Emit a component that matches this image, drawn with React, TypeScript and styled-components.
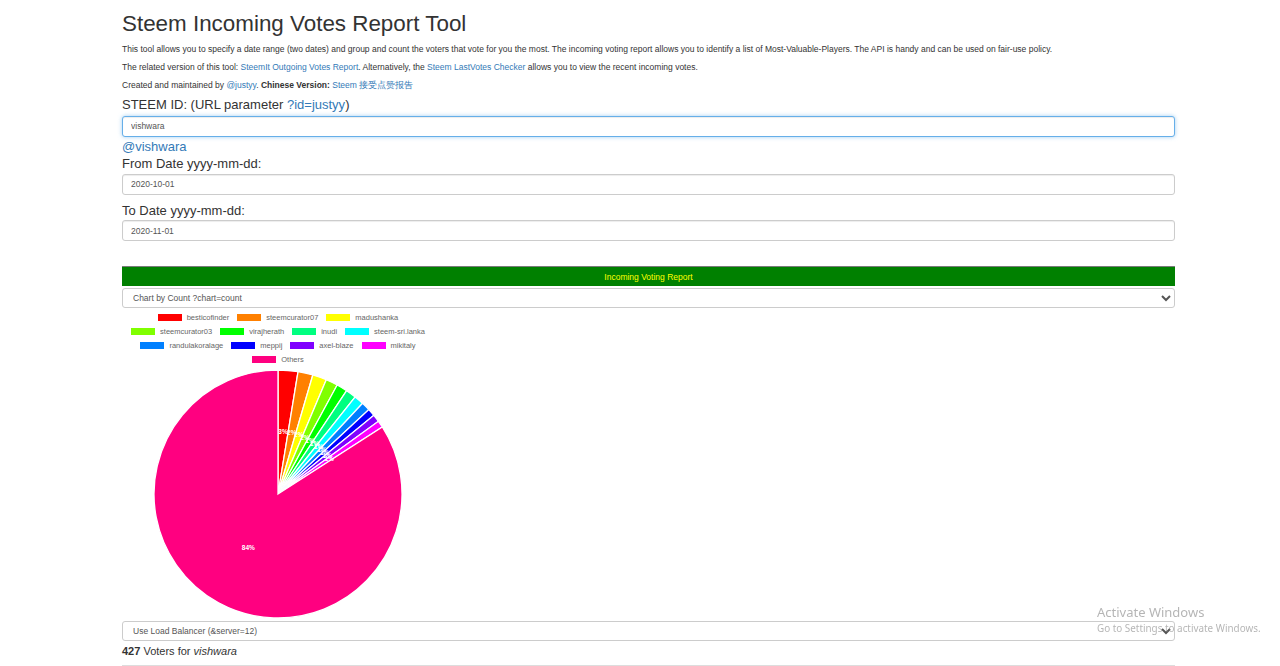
import React from "react";
import styled, {createGlobalStyle} from "styled-components";

type Slice = { name: string; color: string; deg: number }

const slices: Slice[] = [
    {name: "besticofinder", color: "#ff0000", deg: 9.3},
    {name: "steemcurator07", color: "#ff8000", deg: 7.0},
    {name: "madushanka", color: "#ffff00", deg: 6.6},
    {name: "steemcurator03", color: "#80ff00", deg: 5.6},
    {name: "virajherath", color: "#00ff00", deg: 5.1},
    {name: "inudi", color: "#00ff80", deg: 4.9},
    {name: "steem-sri.lanka", color: "#00ffff", deg: 4.5},
    {name: "randulakoralage", color: "#0080ff", deg: 4.1},
    {name: "meppij", color: "#0000ff", deg: 3.5},
    {name: "axel-blaze", color: "#8000ff", deg: 3.5},
    {name: "mikitaly", color: "#ff00ff", deg: 3.2},
    {name: "Others", color: "#ff0080", deg: 302.7},
]

const legendRows = [[0, 1, 2], [3, 4, 5, 6], [7, 8, 9, 10], [11]]

const GlobalStyle = createGlobalStyle`
  body {
    margin: 0;
    background: #fff;
    color: #333;
    font-family: "Liberation Sans", Arial, sans-serif;
  }
`

const Pie: React.FC = () => {
    const cx = 125, cy = 125, r = 124
    const pt = (a: number, rad: number) => {
        const t = a * Math.PI / 180
        return [cx + rad * Math.sin(t), cy - rad * Math.cos(t)]
    }
    let start = 0
    const parts = slices.map(s => {
        const a0 = start, a1 = start + s.deg
        start = a1
        const [x0, y0] = pt(a0, r)
        const [x1, y1] = pt(a1, r)
        const [lx, ly] = pt((a0 + a1) / 2, r / 2)
        return {
            ...s,
            d: `M ${cx} ${cy} L ${x0} ${y0} A ${r} ${r} 0 ${s.deg > 180 ? 1 : 0} 1 ${x1} ${y1} Z`,
            lx, ly,
            label: Math.round(s.deg / 3.6) + "%",
        }
    })
    return (
        <PieSvg width={250} height={250} viewBox="0 0 250 250">
            {parts.map(p => <path key={p.name} d={p.d} fill={p.color} stroke="#fff" strokeWidth={1.3}/>)}
            {parts.map(p => (
                <text key={p.name + "l"} x={p.lx} y={p.ly} fill="#fff" fontSize="6.5" fontWeight="bold"
                      textAnchor="middle" dominantBaseline="middle"
                      fontFamily="Liberation Sans, Arial, sans-serif">{p.label}</text>
            ))}
        </PieSvg>
    )
}

export default function App() {
    return (
        <>
            <GlobalStyle/>
            <Page>
                <Title>Steem Incoming Votes Report Tool</Title>
                <Text>This tool allows you to specify a date range (two dates) and group and count the voters that vote
                    for you the most. The incoming voting report allows you to identify a list of
                    Most-Valuable-Players. The API is handy and can be used on fair-use policy.</Text>
                <Text>The related version of this tool: <Link href="#">SteemIt Outgoing Votes Report</Link>.
                    Alternatively, the <Link href="#">Steem LastVotes Checker</Link> allows you to view the recent
                    incoming votes.</Text>
                <Text>Created and maintained by <Link href="#">@justyy</Link>. <b>Chinese Version:</b> <Link
                    href="#">Steem 接受点赞报告</Link></Text>

                <Label $top={2} $bottom={4}>STEEM ID: (URL parameter <Link href="#">?id=justyy</Link>)</Label>
                <Field $focused defaultValue="vishwara"/>
                <Profile href="#">@vishwara</Profile>

                <Label $top={1}>From Date yyyy-mm-dd:</Label>
                <Field defaultValue="2020-10-01"/>
                <Label $top={9}>To Date yyyy-mm-dd:</Label>
                <Field defaultValue="2020-11-01"/>

                <ReportBar>Incoming Voting Report</ReportBar>
                <Select defaultValue="count">
                    <option value="count">Chart by Count ?chart=count</option>
                </Select>

                <ChartBox>
                    {legendRows.map((row, i) => (
                        <LegendRow key={i}>
                            {row.map(idx => (
                                <LegendItem key={idx}>
                                    <Swatch $color={slices[idx].color}/>
                                    {slices[idx].name}
                                </LegendItem>
                            ))}
                        </LegendRow>
                    ))}
                    <Pie/>
                </ChartBox>

                <Select defaultValue="12">
                    <option value="12">Use Load Balancer (&amp;server=12)</option>
                </Select>
                <Summary><b>427</b> Voters for <i>vishwara</i></Summary>
                <Divider/>
            </Page>
            <Watermark>
                <WatermarkTitle>Activate Windows</WatermarkTitle>
                <WatermarkText>Go to Settings to activate Windows.</WatermarkText>
            </Watermark>
        </>
    )
}

const Page = styled.div`
  margin-left: 122px;
  width: 1053px;
  padding-top: 12px;
`
const Title = styled.h1`
  margin: 0 0 6px;
  font-size: 22.4px;
  font-weight: 500;
  line-height: 1.1;
  color: #333;
`
const Text = styled.p`
  margin: 0 0 6px;
  font-size: 8.5px;
  line-height: 12.3px;
`
const Link = styled.a`
  color: #337ab7;
  text-decoration: none;
`
const Label = styled.h4<{ $top?: number; $bottom?: number }>`
  margin: ${p => p.$top ?? 0}px 0 ${p => p.$bottom ?? 2}px;
  font-size: 13px;
  font-weight: 500;
  line-height: 14.3px;
  color: #333;
`
const Field = styled.input<{ $focused?: boolean }>`
  display: block;
  box-sizing: border-box;
  width: 100%;
  height: 21px;
  padding: 0 8px;
  font-family: "Liberation Sans", Arial, sans-serif;
  font-size: 8.5px;
  color: #555;
  background: #fff;
  border: 1px solid ${p => p.$focused ? "#66afe9" : "#ccc"};
  border-radius: 3px;
  box-shadow: ${p => p.$focused
    ? "inset 0 1px 1px rgba(0,0,0,.075), 0 0 4px rgba(102,175,233,.6)"
    : "inset 0 1px 1px rgba(0,0,0,.075)"};
  outline: none;
`
const Profile = styled.a`
  display: block;
  font-size: 13px;
  line-height: 18.6px;
  color: #337ab7;
  text-decoration: none;
  margin-top: 1px;
`
const ReportBar = styled.div`
  margin-top: 25px;
  height: 20px;
  line-height: 20px;
  text-align: center;
  background: #008000;
  color: #ffff00;
  font-size: 8.5px;
  border-top: 1px solid #7a7a7a;
  box-sizing: border-box;
`
const Select = styled.select`
  display: block;
  box-sizing: border-box;
  width: 100%;
  height: 20px;
  margin-top: 2px;
  padding: 0 6px;
  font-family: "Liberation Sans", Arial, sans-serif;
  font-size: 8.5px;
  color: #555;
  background: #fff;
  border: 1px solid #ccc;
  border-radius: 3px;
  outline: none;
`
const ChartBox = styled.div`
  width: 312px;
  padding-top: 2px;
  display: flex;
  flex-direction: column;
  align-items: center;
`
const LegendRow = styled.div`
  display: flex;
  justify-content: center;
  align-items: center;
  gap: 8px;
  height: 14px;
`
const LegendItem = styled.span`
  display: flex;
  align-items: center;
  font-size: 7.5px;
  color: #666;
  white-space: nowrap;
`
const Swatch = styled.span<{ $color: string }>`
  width: 24px;
  height: 7px;
  margin-right: 5px;
  background: ${p => p.$color};
`
const PieSvg = styled.svg`
  display: block;
  margin-top: 3px;
`
const Summary = styled.p`
  margin: 3px 0 0;
  font-size: 11px;
  line-height: 15.7px;
`
const Divider = styled.hr`
  margin: 5px 0 0;
  border: 0;
  border-top: 1px solid #ddd;
`
const Watermark = styled.div`
  position: fixed;
  left: 1097px;
  top: 604px;
  font-family: "Noto Sans", "Open Sans", sans-serif;
  color: rgba(120, 120, 120, 0.55);
  pointer-events: none;
`
const WatermarkTitle = styled.div`
  font-size: 13px;
  line-height: 17px;
`
const WatermarkText = styled.div`
  font-size: 9.9px;
  line-height: 14px;
`
